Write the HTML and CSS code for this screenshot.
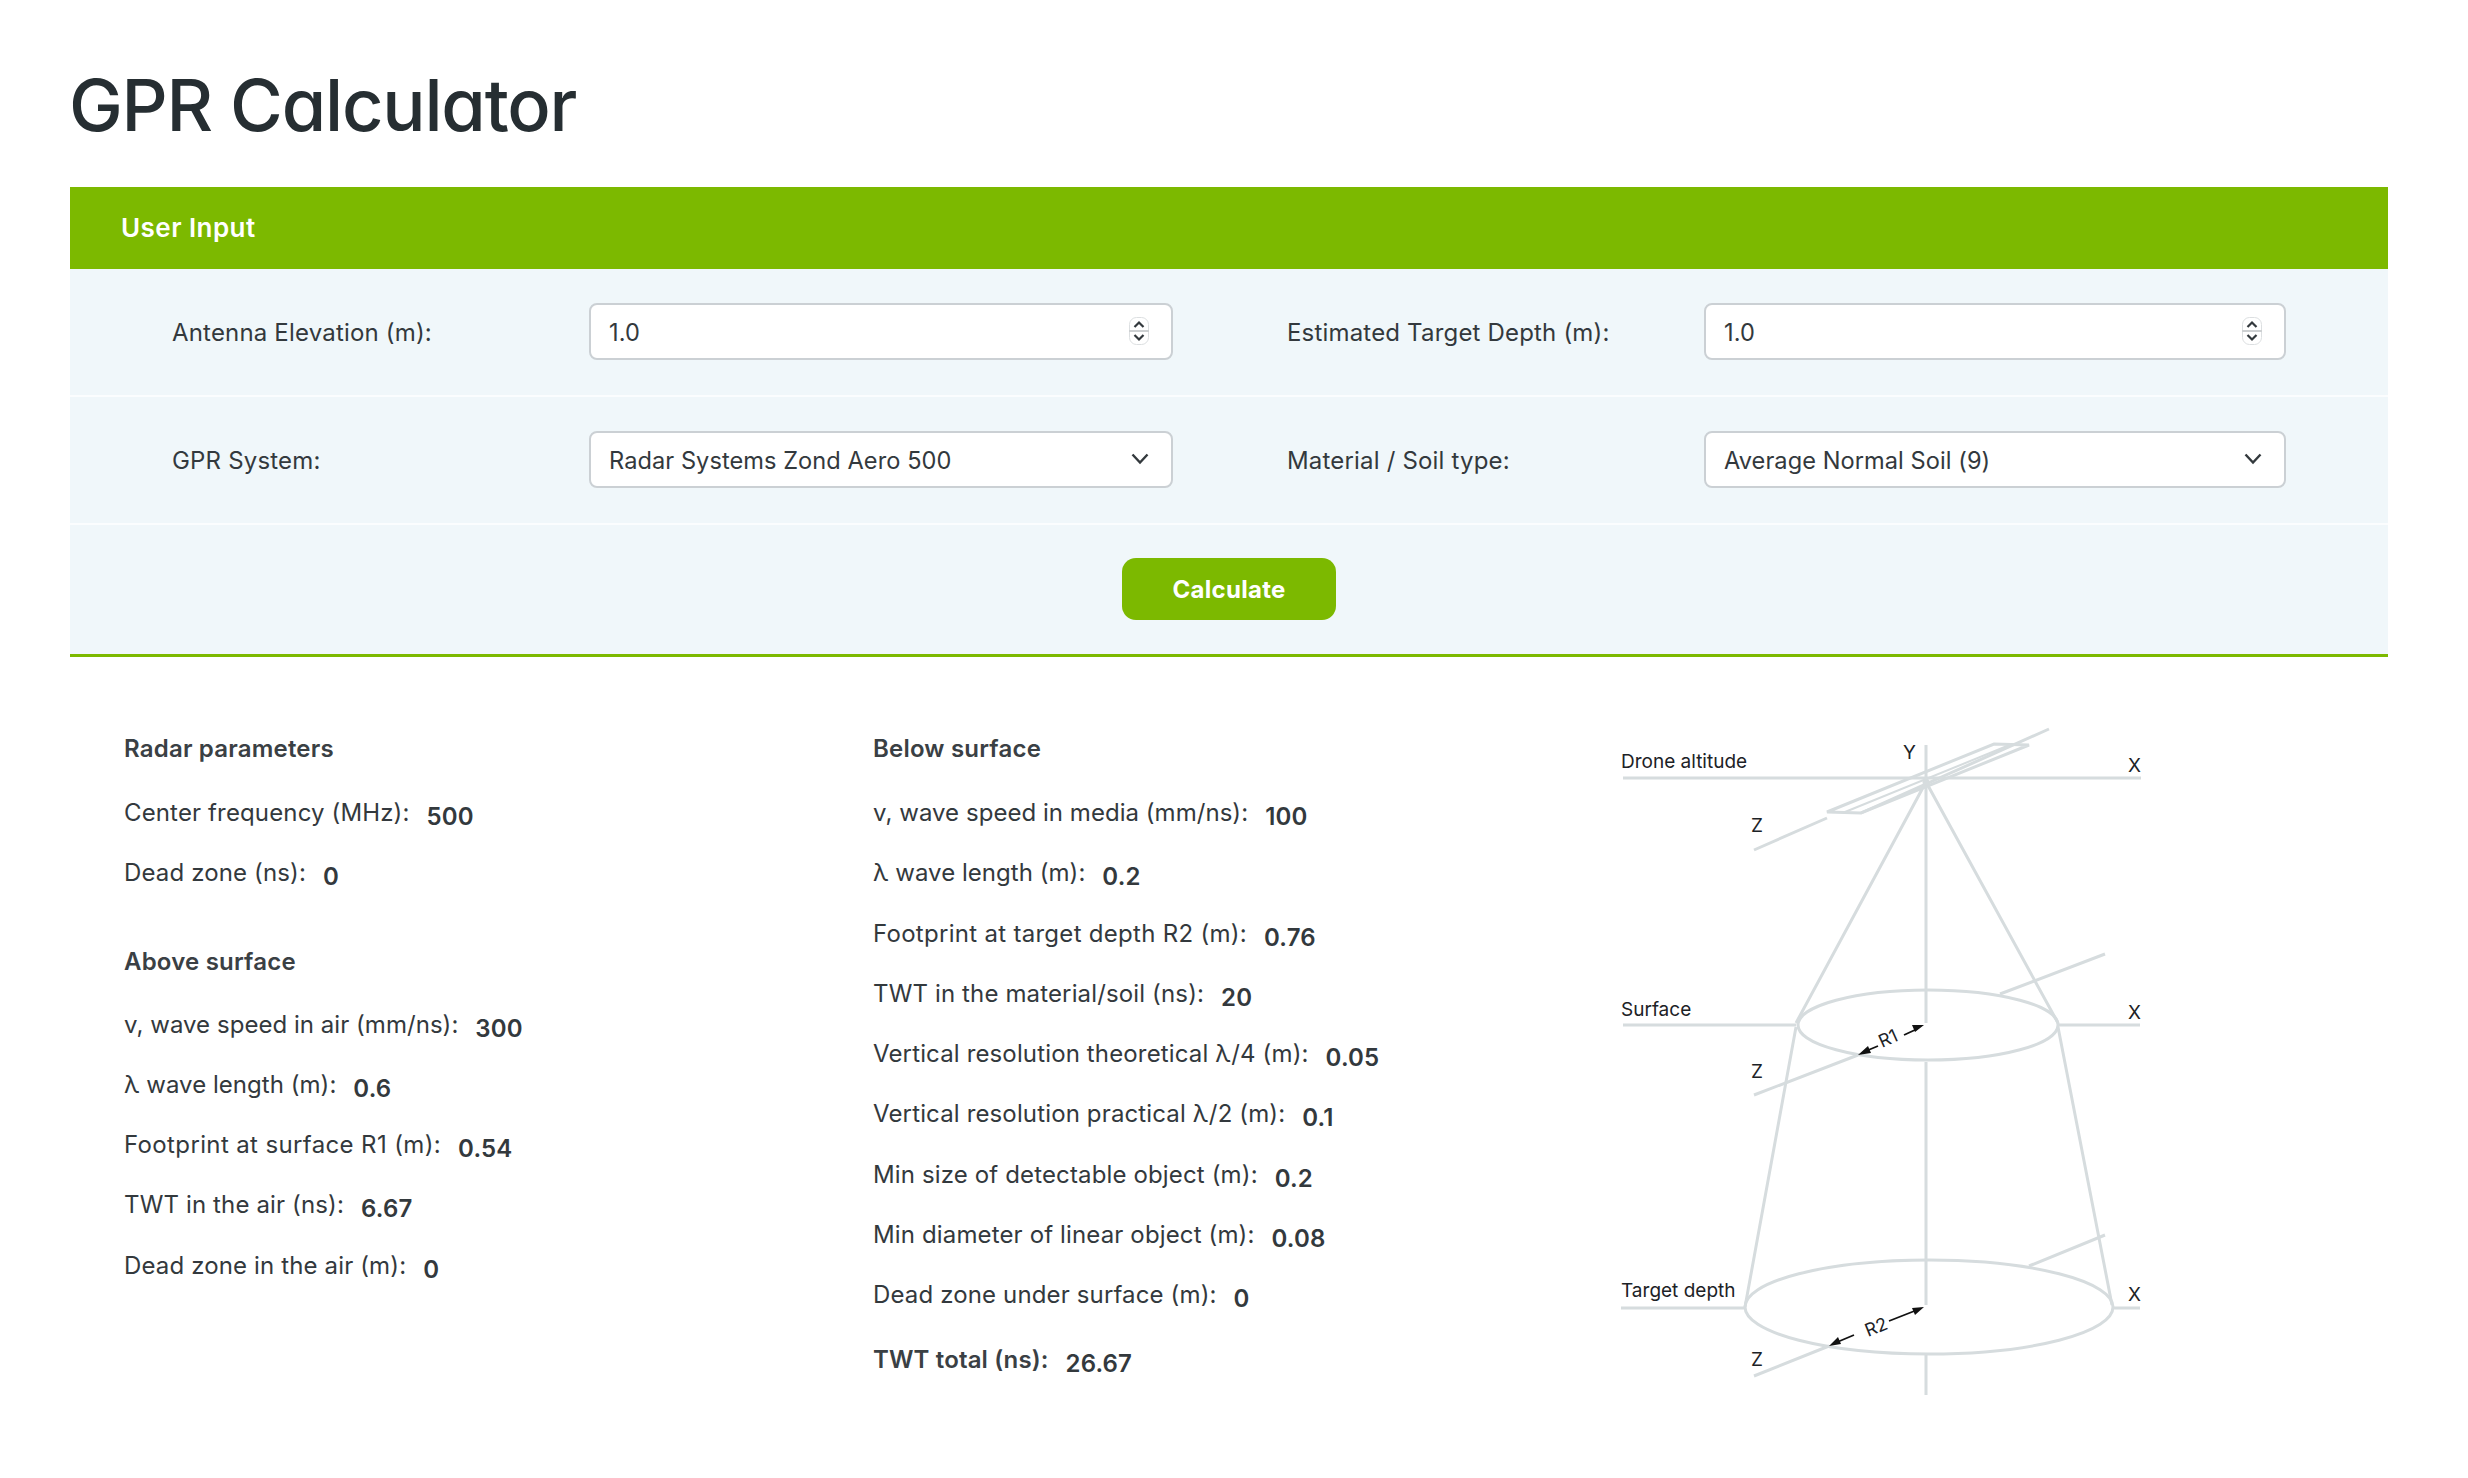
FILE: index.html
```html
<!DOCTYPE html>
<html lang="en">
<head>
<meta charset="utf-8">
<title>GPR Calculator</title>
<link rel="stylesheet" href="styles.css">
</head>
<body>
<main class="page">
  <h1 class="title">GPR Calculator</h1>
  <section class="panel">
    <header class="panel-head">User Input</header>
    <div class="form-row">
      <label class="form-label">Antenna Elevation (m):</label>
      <div class="field">
        <input class="control" type="text" value="1.0">
        <svg class="spin" viewBox="0 0 20 28"><rect x="0.5" y="0.5" width="19" height="27" rx="7" fill="#fff" stroke="#dcdfe1"/><path d="M0 14h20" stroke="#cdd0d2" stroke-width="2"/><path d="M5.500 10l4.500-4.500 4.500 4.500M5.500 18l4.500 4.500 4.500-4.500" fill="none" stroke="#33393d" stroke-width="2.200"/></svg>
      </div>
      <label class="form-label form-label-r">Estimated Target Depth (m):</label>
      <div class="field">
        <input class="control" type="text" value="1.0">
        <svg class="spin" viewBox="0 0 20 28"><rect x="0.5" y="0.5" width="19" height="27" rx="7" fill="#fff" stroke="#dcdfe1"/><path d="M0 14h20" stroke="#cdd0d2" stroke-width="2"/><path d="M5.500 10l4.500-4.500 4.500 4.500M5.500 18l4.500 4.500 4.500-4.500" fill="none" stroke="#33393d" stroke-width="2.200"/></svg>
      </div>
    </div>
    <div class="form-row">
      <label class="form-label">GPR System:</label>
      <div class="field">
        <span class="control">Radar Systems Zond Aero 500</span>
        <svg class="chev" viewBox="0 0 18 12"><path d="M1.500 1.500L9 9.500l7.500-8" fill="none" stroke="#33393d" stroke-width="2.400"/></svg>
      </div>
      <label class="form-label form-label-r">Material / Soil type:</label>
      <div class="field">
        <span class="control">Average Normal Soil (9)</span>
        <svg class="chev" viewBox="0 0 18 12"><path d="M1.500 1.500L9 9.500l7.500-8" fill="none" stroke="#33393d" stroke-width="2.400"/></svg>
      </div>
    </div>
    <div class="action-row"><button class="calc" type="button">Calculate</button></div>
  </section>

  <section class="results">
    <div class="col col-a">
      <h2 class="group">Radar parameters</h2>
      <p class="item"><span>Center frequency (MHz):</span><b>500</b></p>
      <p class="item"><span>Dead zone (ns):</span><b>0</b></p>
      <h2 class="group group-next">Above surface</h2>
      <p class="item"><span class="tight">v, wave speed in air (mm/ns):</span><b>300</b></p>
      <p class="item"><span class="tight">λ wave length (m):</span><b>0.6</b></p>
      <p class="item"><span class="wider">Footprint at surface R1 (m):</span><b>0.54</b></p>
      <p class="item"><span>TWT in the air (ns):</span><b>6.67</b></p>
      <p class="item"><span>Dead zone in the air (m):</span><b>0</b></p>
    </div>
    <div class="col col-b">
      <h2 class="group">Below surface</h2>
      <p class="item"><span class="tight">v, wave speed in media (mm/ns):</span><b>100</b></p>
      <p class="item"><span class="tight">λ wave length (m):</span><b>0.2</b></p>
      <p class="item"><span class="wide">Footprint at target depth R2 (m):</span><b>0.76</b></p>
      <p class="item"><span>TWT in the material/soil (ns):</span><b>20</b></p>
      <p class="item"><span>Vertical resolution theoretical λ/4 (m):</span><b>0.05</b></p>
      <p class="item"><span>Vertical resolution practical λ/2 (m):</span><b>0.1</b></p>
      <p class="item"><span>Min size of detectable object (m):</span><b>0.2</b></p>
      <p class="item"><span>Min diameter of linear object (m):</span><b>0.08</b></p>
      <p class="item"><span>Dead zone under surface (m):</span><b>0</b></p>
      <p class="item item-total"><span>TWT total (ns):</span><b>26.67</b></p>
    </div>
    <svg class="diagram" viewBox="1600 710 560 700" width="560" height="700">
      <g class="ln">
        <path d="M1623 778H2141M1926 745V1023M1926 1062V1305M1926 1355V1395"/>
        <path d="M1754 850L1827 818M1861 813L2049 729"/>
        <path d="M1827 812L1994 744L2029 745L1861 813Z"/>
        <path d="M1845 812L2012 744" class="thin"/>
        <path d="M1796 1023L1926 782L2058 1023"/>
        <circle cx="1926" cy="782" r="3.500" class="dot"/>
        <ellipse cx="1928" cy="1025" rx="130" ry="35"/>
        <path d="M1623 1025H1796M2058 1025H2140"/>
        <path d="M2000 994L2105 954M1858 1055L1754 1095"/>
        <path d="M1796 1027L1745 1307M2058 1027L2112 1305"/>
        <ellipse cx="1929" cy="1307" rx="184" ry="47"/>
        <path d="M1621 1308H1745M2113 1308H2140"/>
        <path d="M2029 1266L2105 1235M1829 1346L1754 1376"/>
      </g>
      <g class="arrow">
        <path d="M1866 1051L1878 1046M1904 1035L1917 1029"/>
        <path d="M1858 1055l10-9 3 7zM1924 1025l-12 0 3 7z" class="head"/>
        <path d="M1835 1343L1854 1335M1889 1321L1917 1310"/>
        <path d="M1829 1346l9-9 3 7zM1924 1307l-12 1 3 7z" class="head"/>
      </g>
      <g class="dtext">
        <text x="1621" y="768">Drone altitude</text>
        <text x="1621" y="1016">Surface</text>
        <text x="1621" y="1297">Target depth</text>
        <text x="1903" y="759">Y</text>
        <text x="2128" y="772">X</text>
        <text x="2128" y="1019">X</text>
        <text x="2128" y="1301">X</text>
        <text x="1751" y="832">Z</text>
        <text x="1751" y="1078">Z</text>
        <text x="1751" y="1366">Z</text>
        <text class="rlabel" x="1882" y="1048" transform="rotate(-24 1882 1048)">R1</text>
        <text class="rlabel" x="1868" y="1337" transform="rotate(-22 1868 1337)">R2</text>
      </g>
    </svg>
  </section>
</main>
</body>
</html>
```
FILE: styles.css
```css
* { box-sizing: border-box; }
html, body { margin: 0; background: #fff; }
body {
  font-family: Inter, "Liberation Sans", sans-serif;
  color: #33393d;
  font-size: 24px;
  letter-spacing: 0.14px;
}
.page { padding: 0 80px 0 70px; height: 1478px; overflow: hidden; }
.title {
  margin: 0 0 0 -1px;
  height: 187px;
  padding-top: 61px;
  font-size: 72px;
  line-height: 88px;
  font-weight: 500;
  letter-spacing: -1.2px;
  color: #262e32;
  font-feature-settings: "cv11";
}
.panel { background: #f0f7fa; border-bottom: 3px solid #7cb900; }
.panel-head {
  height: 82px;
  padding-left: 51px;
  background: #7cb900;
  color: #fff;
  font-weight: 600;
  font-size: 26px;
  letter-spacing: 0.45px;
  line-height: 82px;
}
.form-row {
  height: 128px;
  padding: 0 102px 2px 102px;
  border-bottom: 2px solid #fbfdfe;
  display: grid;
  grid-template-columns: 417px 584px 531px 582px;
  align-items: center;
}
.form-label { padding-top: 2px; letter-spacing: 0.18px; }
.form-label-r { margin-left: 114px; }
.field {
  height: 57px;
  display: flex;
  align-items: center;
  padding: 2px 22px 0 18px;
  background: #fff;
  border: 2px solid #cbd0d4;
  border-radius: 8px;
}
.control {
  flex: 1;
  min-width: 0;
  border: 0;
  outline: 0;
  padding: 0;
  background: none;
  font: inherit;
  font-size: 23.6px;
  letter-spacing: 0.06px;
  color: #33393d;
}
.spin { width: 20px; height: 28px; margin-top: -2px; }
.chev { width: 18px; height: 12px; margin-top: -2px; }
.action-row {
  height: 129px;
  padding-bottom: 1px;
  display: flex;
  justify-content: center;
  align-items: center;
}
.calc {
  width: 214px;
  height: 62px;
  border: 0;
  border-radius: 14px;
  background: #7cb900;
  color: #fff;
  font: 700 24px Inter, sans-serif;
  letter-spacing: 0.3px;
}
.results { display: flex; padding-top: 53px; }
.col { flex: none; padding-top: 21px; }
.col-a { width: 803px; padding-left: 54px; }
.col-b { width: 727px; }
.diagram { flex: none; }
.group { margin: 0; height: 64px; font-size: 24px; line-height: 35px; font-weight: 600; color: #3a4044; letter-spacing: 0.2px; }
.group-next { margin-top: 28px; height: 63px; }
.item { margin: 0; height: 60.3px; display: flex; gap: 17px; line-height: 36px; }
.item b { font-weight: 600; position: relative; top: 4px; }
.item-total { margin-top: 4px; }
.item-total span { font-weight: 600; color: #3a4044; }
.tight { letter-spacing: 0.04px; }
.wide { letter-spacing: 0.29px; }
.wider { letter-spacing: 0.37px; }
.ln { fill: none; stroke: #d6dcde; stroke-width: 3; }
.ln .thin { stroke-width: 2; }
.ln .dot { fill: #d6dcde; stroke: none; }
.arrow { stroke: #111; stroke-width: 1.800; fill: none; }
.arrow .head { fill: #111; stroke: none; }
.dtext { font-size: 19px; fill: #1c2226; letter-spacing: 0; }
.dtext .rlabel { font-size: 18px; }
```
